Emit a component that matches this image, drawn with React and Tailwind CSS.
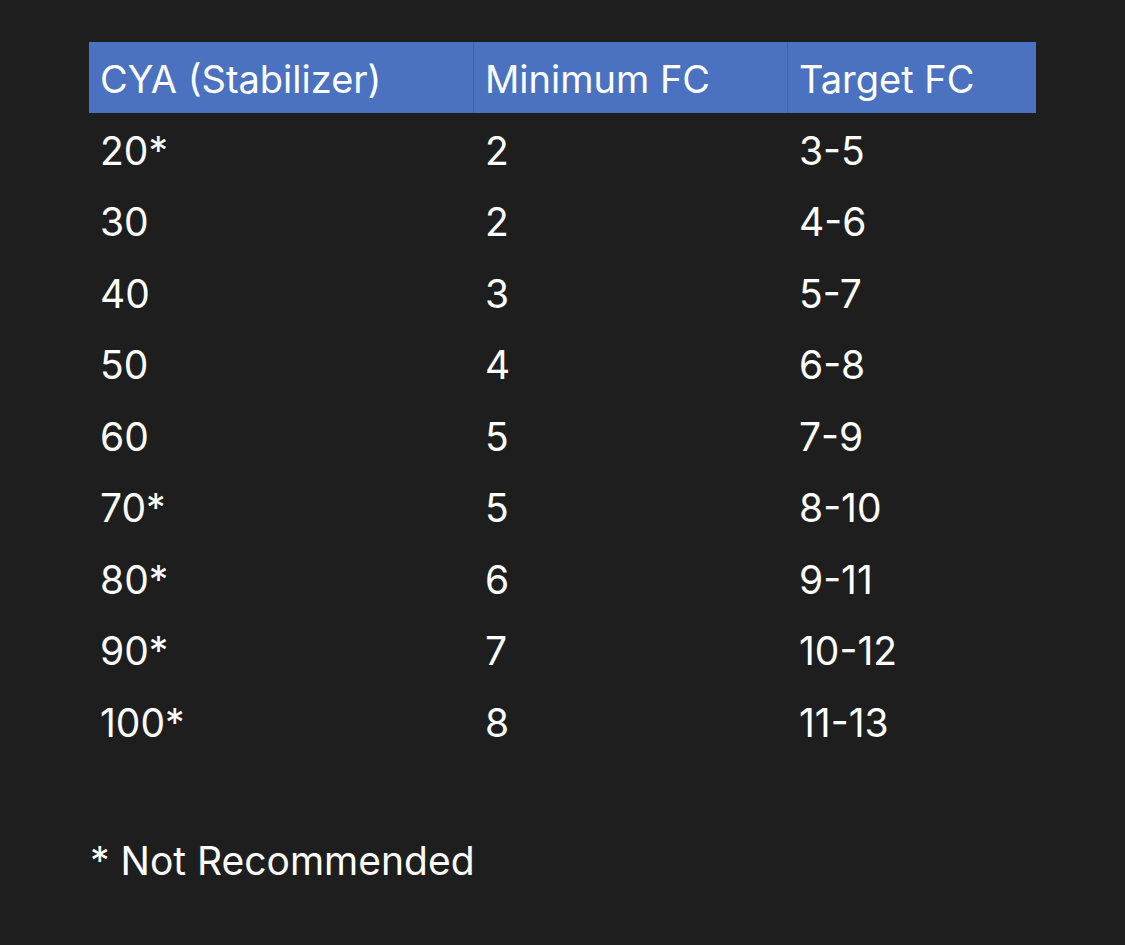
import React from "react";

const rows = [
  ["20*", "2", "3-5"],
  ["30", "2", "4-6"],
  ["40", "3", "5-7"],
  ["50", "4", "6-8"],
  ["60", "5", "7-9"],
  ["70*", "5", "8-10"],
  ["80*", "6", "9-11"],
  ["90*", "7", "10-12"],
  ["100*", "8", "11-13"],
];

const cols = ["w-[385px]", "w-[314px]", "w-[248px]"];

const App = () => {
  return (
    <div
      className="min-h-screen w-full bg-[#1e1e1e] text-white pt-[42px] pl-[89px]"
      style={{ fontFamily: "Inter, 'Noto Sans', sans-serif" }}
    >
      <div className="flex flex-col w-[947px]">
        {/* header */}
        <div className="flex flex-row h-[71px] bg-[#4a72c0]">
          <div className="w-[385px] flex items-center pl-[11px] pt-[3px] text-[38px] border-r border-[#3d63aa]">
            CYA (Stabilizer)
          </div>
          <div className="w-[314px] flex items-center pl-[11px] pt-[3px] text-[38px] border-r border-[#3d63aa]">
            Minimum FC
          </div>
          <div className="w-[248px] flex items-center pl-[11px] pt-[3px] text-[38px]">
            Target FC
          </div>
        </div>

        {rows.map((row, i) => (
          <div key={i} className="flex flex-row h-[71.5px]">
            {row.map((cell, j) => (
              <div
                key={j}
                className={`${cols[j]} flex items-center pl-[11px] pt-[4px] text-[39px]`}
              >
                {cell}
              </div>
            ))}
          </div>
        ))}
      </div>

      <div className="mt-[81px] text-[39px] leading-[46px] pl-[1px]">
        * Not Recommended
      </div>
    </div>
  );
};

export default App;
